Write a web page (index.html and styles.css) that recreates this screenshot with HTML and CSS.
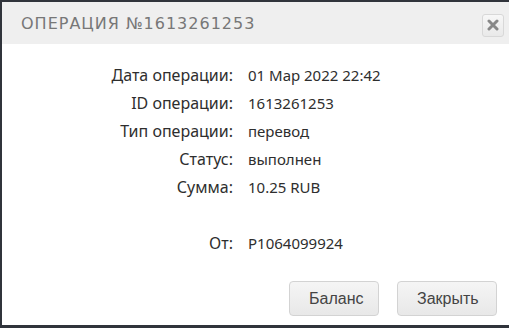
FILE: index.html
```html
<!DOCTYPE html>
<html lang="ru">
<head>
    <meta charset="UTF-8">
    <title>Операция</title>
    <link rel="stylesheet" href="styles.css">
</head>
<body>
    <div class="dialog">
        <div class="dialog-header">
            <span class="dialog-title">Операция №1613261253</span>
            <button class="close-btn" title="Закрыть">
                <svg width="12" height="12" viewBox="0 0 12 12">
                    <path d="M2 2 L10 10 M10 2 L2 10" stroke="#888" stroke-width="3" stroke-linecap="round"/>
                </svg>
            </button>
        </div>

        <div class="dialog-body">
            <div class="info-grid">
                <span class="label">Дата операции:</span>
                <span class="value">01 Мар 2022 22:42</span>

                <span class="label">ID операции:</span>
                <span class="value">1613261253</span>

                <span class="label">Тип операции:</span>
                <span class="value">перевод</span>

                <span class="label">Статус:</span>
                <span class="value">выполнен</span>

                <span class="label">Сумма:</span>
                <span class="value">10.25 RUB</span>

                <span class="spacer"></span>
                <span class="spacer"></span>

                <span class="label">От:</span>
                <span class="value">P1064099924</span>
            </div>
        </div>

        <div class="dialog-footer">
            <button class="btn">Баланс</button>
            <button class="btn">Закрыть</button>
        </div>
    </div>
</body>
</html>
```

FILE: styles.css
```css
html, body {
    margin: 0;
    height: 100%;
}

body {
    background-color: #30343b;
    padding: 2px 0 3px 2px;
    box-sizing: border-box;
    overflow: hidden;
}

.dialog {
    background-color: #fff;
    height: 100%;
    display: flex;
    flex-direction: column;
}

.dialog-header {
    background-color: #efefef;
    height: 42px;
    display: flex;
    align-items: center;
    justify-content: space-between;
    padding: 0 5px 0 19px;
}

.dialog-title {
    font-family: "DejaVu Sans", sans-serif;
    font-size: 16px;
    letter-spacing: 1px;
    text-transform: uppercase;
    color: #777;
    margin-top: 1px;
}

.close-btn {
    width: 22px;
    height: 23px;
    padding: 0;
    margin-top: 4px;
    border: 1px solid #d8d8d8;
    border-radius: 3px;
    background: linear-gradient(#f7f7f7, #e9e9e9);
    display: flex;
    align-items: center;
    justify-content: center;
}

.dialog-body {
    flex: 1;
    padding-top: 17px;
}

.info-grid {
    display: grid;
    grid-template-columns: 231px auto;
    column-gap: 15px;
    grid-auto-rows: 28px;
    align-items: center;
    font-family: "Noto Sans", sans-serif;
    font-size: 15px;
    color: #2e2e2e;
}

.label {
    text-align: right;
    font-size: 16px;
}

.dialog-footer {
    display: flex;
    justify-content: flex-end;
    gap: 18px;
    padding: 0 12px 9px 0;
}

.btn {
    font-family: "Liberation Sans", Arial, sans-serif;
    font-size: 16px;
    color: #444;
    height: 35px;
    padding: 0 19px;
    border: 1px solid #d3d3d3;
    border-radius: 4px;
    background: linear-gradient(#f5f5f5, #e8e8e8);
    cursor: pointer;
}

.btn:first-child {
    width: 90px;
}

.btn:last-child {
    width: 100px;
}
```
